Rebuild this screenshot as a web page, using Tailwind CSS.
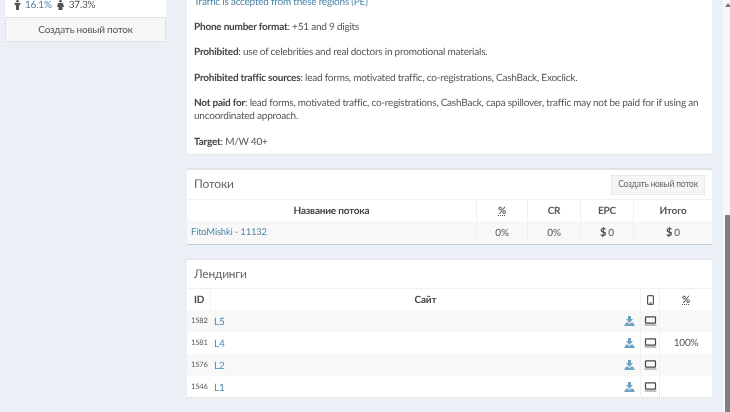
<!DOCTYPE html>
<html lang="ru">
<head>
  <meta charset="utf-8" />
  <title>Оффер</title>
  <script src="https://cdn.jsdelivr.net/npm/@tailwindcss/browser@4"></script>
</head>
<body class="h-[412px] w-[730px] overflow-hidden bg-[#ebeff6] font-['Lato','Noto_Sans',sans-serif] text-[10px] text-[#555] tracking-[-0.22px] [text-rendering:geometricPrecision]">
  <div class="flex blur-[0.35px]">
    <!-- sidebar -->
    <aside class="ml-[5px] w-[161px] shrink-0">
      <div class="flex h-[17px] items-start gap-[3px] bg-white pl-[9px] text-[10px] leading-[10px]">
        <svg class="h-[10px] w-[7px]" viewBox="0 0 7 10" fill="#555"><circle cx="3.500" cy="1.300" r="1.300"/><path d="M0 3h7L5 6v4H2V6z"/></svg>
        <span class="ml-[1px] text-[#4d87a8]">16.1%</span>
        <svg class="ml-[2px] h-[10px] w-[7px]" viewBox="0 0 7 10" fill="#555"><circle cx="3.500" cy="1.300" r="1.300"/><path d="M1 3h5l1 4H5.500v3h-4V7H0z"/></svg>
        <span class="ml-[2px]">37.3%</span>
      </div>
      <button class="block h-[25px] w-full border border-dotted border-[#c9cdd3] bg-[#f6f6f6] text-center text-[10px] text-[#555]">Создать новый поток</button>
    </aside>

    <main class="ml-[21px] w-[525px] shrink-0">
      <!-- offer description -->
      <section class="h-[155px] rounded-b-[2px] border-b border-dotted border-[#c9cdd3] bg-white px-[7px] text-[10px] leading-[13px]">
        <p class="h-[8px] -translate-y-[4px] text-[#4d87a8]">Traffic is accepted from these regions (PE)</p>
        <p class="mt-[13px]"><b class="font-bold text-[#444]">Phone number format</b>: +51 and 9 digits</p>
        <p class="mt-[12.400px]"><b class="font-bold text-[#444]">Prohibited</b>: use of celebrities and real doctors in promotional materials.</p>
        <p class="mt-[12.400px]"><b class="font-bold text-[#444]">Prohibited traffic sources</b>: lead forms, motivated traffic, co-registrations, CashBack, Exoclick.</p>
        <p class="mt-[12.400px]"><b class="font-bold text-[#444]">Not paid for</b>: lead forms, motivated traffic, co-registrations, CashBack, capa spillover, traffic may not be paid for if using an uncoordinated approach.</p>
        <p class="mt-[12.400px]"><b class="font-bold text-[#444]">Target</b>: M/W 40+</p>
      </section>

      <!-- streams -->
      <section class="mt-[13px] border-t-2 border-b border-[#dfe3e9] border-b-[#c9cdd3] bg-white">
        <div class="flex h-[29px] items-center justify-between px-[7px]">
          <h2 class="pb-[2px] text-[12px] font-normal text-[#666]">Потоки</h2>
          <button class="h-[20px] w-[94px] border border-dotted border-[#ddd] bg-[#f5f5f5] text-[8.500px] text-[#666]">Создать новый поток</button>
        </div>
        <div class="grid grid-cols-[289px_51px_53px_53px_79px] border-t border-[#f0f0f0]">
          <div class="flex h-[21px] items-center justify-center pt-[2px] text-[10px] font-bold text-[#444]">Название потока</div>
          <div class="flex items-center justify-center border-l border-[#f0f0f0] pt-[2px] text-[10px] font-bold text-[#555] underline decoration-dotted">%</div>
          <div class="flex items-center justify-center border-l border-[#f0f0f0] pt-[2px] text-[10px] font-bold text-[#555]">CR</div>
          <div class="flex items-center justify-center border-l border-[#f0f0f0] pt-[2px] text-[10px] font-bold text-[#555]">EPC</div>
          <div class="flex items-center justify-center border-l border-[#f0f0f0] pt-[2px] text-[10px] font-bold text-[#555]">Итого</div>
          <div class="flex h-[23px] items-center bg-[#f8f8f8] pl-[4px] pt-[2px] text-[9.500px] text-[#4d87a8]">FitoMishki - 11132</div>
          <div class="flex items-center justify-center border-l border-[#f0f0f0] bg-[#f8f8f8] pt-[2px]">0%</div>
          <div class="flex items-center justify-center border-l border-[#f0f0f0] bg-[#f8f8f8] pt-[2px]">0%</div>
          <div class="flex items-center justify-center gap-[2px] border-l border-[#f0f0f0] bg-[#f8f8f8] pt-[2px]"><b class="text-[11px] text-[#444]">$</b>0</div>
          <div class="flex items-center justify-center gap-[2px] border-l border-[#f0f0f0] bg-[#f8f8f8] pt-[2px]"><b class="text-[11px] text-[#444]">$</b>0</div>
        </div>
      </section>

      <!-- landings -->
      <section class="mt-[14px] border-t border-b border-dotted border-[#c9cdd3] bg-white">
        <div class="flex h-[28px] items-center pl-[7px]">
          <h2 class="text-[12px] font-normal text-[#666]">Лендинги</h2>
        </div>
        <div class="grid grid-cols-[23px_430px_19px_53px] border-t border-[#f0f0f0] text-[10px]">
          <div class="flex h-[21px] items-center pl-[7px] pt-[2px] text-[10px] font-bold text-[#444]">ID</div>
          <div class="flex items-center justify-center border-l border-[#f5f5f5] pt-[2px] text-[10px] font-bold text-[#444]">Сайт</div>
          <div class="flex items-center justify-center border-l border-[#f0f0f0]">
            <svg class="h-[10px] w-[7px]" viewBox="0 0 7 10" fill="none" stroke="#555" stroke-width="1.200"><rect x=".6" y=".6" width="5.800" height="8.800" rx="1"/><path d="M2.500 8h2"/></svg>
          </div>
          <div class="flex items-center justify-center border-l border-[#f0f0f0] pt-[2px] text-[10px] font-bold text-[#555] underline decoration-dotted">%</div>

          <div class="flex h-[22px] items-start bg-[#f8f8f8] pl-[4px] pt-[6px] text-[7.500px] leading-[9px]">1582</div>
          <div class="flex items-center justify-between bg-[#f8f8f8] pl-[4px] pr-[5px] text-[#4d87a8]">
            <span class="pt-[3px]">L5</span>
            <svg class="h-[10px] w-[11px]" viewBox="0 0 11 10" fill="#6fa3c2"><path d="M4 0h3v3h2L5.500 7 2 3h2zM0 10l2-3.500h1.500l2 1.500 2-1.500H9l2 3.500z"/></svg>
          </div>
          <div class="flex items-center justify-center border-l border-[#f0f0f0] bg-[#f8f8f8]">
            <svg class="h-[10px] w-[13px]" viewBox="0 0 13 10" fill="none" stroke="#444" stroke-width="1.200"><rect x="1.500" y=".8" width="10" height="6.400" rx=".6"/><path d="M.5 9h12" stroke="#999"/></svg>
          </div>
          <div class="border-l border-[#f0f0f0] bg-[#f8f8f8]"></div>

          <div class="flex h-[22px] items-start pl-[4px] pt-[6px] text-[7.500px] leading-[9px]">1581</div>
          <div class="flex items-center justify-between pl-[4px] pr-[5px] text-[#4d87a8]">
            <span class="pt-[3px]">L4</span>
            <svg class="h-[10px] w-[11px]" viewBox="0 0 11 10" fill="#6fa3c2"><path d="M4 0h3v3h2L5.500 7 2 3h2zM0 10l2-3.500h1.500l2 1.500 2-1.500H9l2 3.500z"/></svg>
          </div>
          <div class="flex items-center justify-center border-l border-[#f0f0f0]">
            <svg class="h-[10px] w-[13px]" viewBox="0 0 13 10" fill="none" stroke="#444" stroke-width="1.200"><rect x="1.500" y=".8" width="10" height="6.400" rx=".6"/><path d="M.5 9h12" stroke="#999"/></svg>
          </div>
          <div class="flex items-center justify-center border-l border-[#f0f0f0]">100%</div>

          <div class="flex h-[22px] items-start bg-[#f8f8f8] pl-[4px] pt-[6px] text-[7.500px] leading-[9px]">1576</div>
          <div class="flex items-center justify-between bg-[#f8f8f8] pl-[4px] pr-[5px] text-[#4d87a8]">
            <span class="pt-[3px]">L2</span>
            <svg class="h-[10px] w-[11px]" viewBox="0 0 11 10" fill="#6fa3c2"><path d="M4 0h3v3h2L5.500 7 2 3h2zM0 10l2-3.500h1.500l2 1.500 2-1.500H9l2 3.500z"/></svg>
          </div>
          <div class="flex items-center justify-center border-l border-[#f0f0f0] bg-[#f8f8f8]">
            <svg class="h-[10px] w-[13px]" viewBox="0 0 13 10" fill="none" stroke="#444" stroke-width="1.200"><rect x="1.500" y=".8" width="10" height="6.400" rx=".6"/><path d="M.5 9h12" stroke="#999"/></svg>
          </div>
          <div class="border-l border-[#f0f0f0] bg-[#f8f8f8]"></div>

          <div class="flex h-[21px] items-start pl-[4px] pt-[6px] text-[7.500px] leading-[9px]">1546</div>
          <div class="flex items-center justify-between pl-[4px] pr-[5px] text-[#4d87a8]">
            <span class="pt-[3px]">L1</span>
            <svg class="h-[10px] w-[11px]" viewBox="0 0 11 10" fill="#6fa3c2"><path d="M4 0h3v3h2L5.500 7 2 3h2zM0 10l2-3.500h1.500l2 1.500 2-1.500H9l2 3.500z"/></svg>
          </div>
          <div class="flex items-center justify-center border-l border-[#f0f0f0]">
            <svg class="h-[10px] w-[13px]" viewBox="0 0 13 10" fill="none" stroke="#444" stroke-width="1.200"><rect x="1.500" y=".8" width="10" height="6.400" rx=".6"/><path d="M.5 9h12" stroke="#999"/></svg>
          </div>
          <div class="border-l border-[#f0f0f0]"></div>
        </div>
      </section>
    </main>

    <!-- scrollbar -->
    <div class="ml-auto flex h-[412px] w-[7px] flex-col bg-[#f7f7f7] pl-[2px]">
      <div class="mt-[3px] h-0 w-0 self-center border-x-[3px] border-b-[4px] border-x-transparent border-b-[#777]"></div>
      <div class="mt-[208px] flex-1 bg-[#7f7f7f]"></div>
    </div>
  </div>
</body>
</html>
